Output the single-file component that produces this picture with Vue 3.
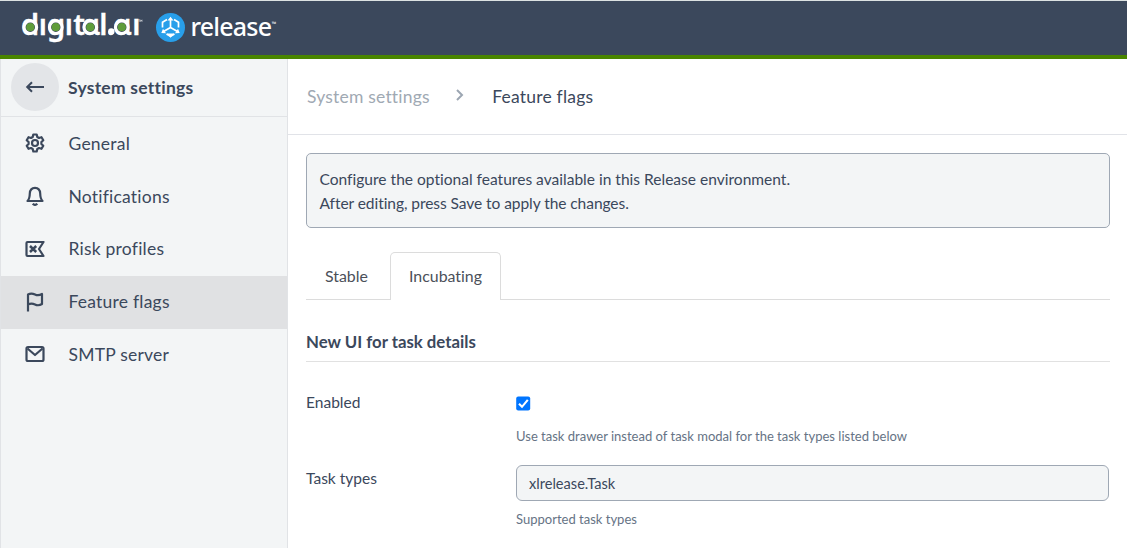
<script setup>
const items = [
  { id: 'general', label: 'General' },
  { id: 'notifications', label: 'Notifications' },
  { id: 'risk', label: 'Risk profiles' },
  { id: 'flags', label: 'Feature flags', active: true },
  { id: 'smtp', label: 'SMTP server' },
]
const dots = [30.3, 55.8, 90.3, 121.8]
</script>

<template>
  <div class="page">
    <header class="topbar">
      <svg class="brand" width="290" height="54" viewBox="0 1 290 54">
        <g fill="#fff">
          <text class="wordmark" y="34.700" x="21 38.700 47 64.700 73.300 81.700 99.200 106.800 113.200 132.200">dıgıtɑl.ɑı</text>
          <circle cx="111.300" cy="31.500" r="3.200" />
          <path d="M138.300 19.800H140M139.200 19.800V22M140.600 22V19.800L141.300 21L142 19.800V22" fill="none" stroke="#fff" stroke-width=".45" />
        </g>
        <g v-for="x in dots" :key="x">
          <circle :cx="x" cy="27.200" r="6.300" fill="#3b485c" stroke="#fff" stroke-width="3.200" />
          <circle :cx="x" cy="27.200" r="4.100" fill="#5f9c3a" />
        </g>
        <circle cx="170.500" cy="27.500" r="14.500" fill="#289fea" />
        <g fill="none" stroke="#fff" stroke-width="1.700">
          <path d="M170.500 27.500V19M170.500 27.500L163.500 31.500M170.500 27.500L177.500 31.500" />
          <path d="M167 19.500L162.500 22.200V27.500M174 19.500L178.500 22.200V27.500M166.500 34L170.500 36.300L174.500 34" />
        </g>
        <g fill="#fff">
          <path d="M170.500 16.700L173.500 20.500H167.500ZM161.300 33L163 28.800L166 33.300ZM179.700 33L178 28.800L175 33.300ZM170.500 37.800L167 33.500H174Z" />
        </g>
        <text class="product" x="190.500" y="35.700" textLength="81.500" fill="#fff">release</text>
        <text class="tm" x="271.800" y="25.500" fill="#fff">™</text>
      </svg>
    </header>

    <div class="body">
      <aside class="sidebar">
        <div class="side-head">
          <span class="back">
            <svg width="20" height="20" viewBox="0 0 20 20" fill="none" stroke="#3b485c" stroke-width="2"><path d="M19 10H2M7 5.200L2.200 10L7 14.800" /></svg>
          </span>
          <strong>System settings</strong>
        </div>
        <nav>
          <a v-for="item in items" :key="item.id" class="item" :class="{ active: item.active }">
            <svg width="20" height="20" viewBox="0 0 20 20" fill="none" stroke="#3b485c" stroke-width="2.200" stroke-linejoin="round">
              <template v-if="item.id === 'general'">
                <circle cx="10" cy="10" r="3" />
                <path d="M8.300 1.500H11.700L12.300 4L14 5L16.500 4.200L18.300 7.200L16.400 9V11L18.300 12.800L16.500 15.800L14 15L12.300 16L11.700 18.500H8.300L7.700 16L6 15L3.500 15.800L1.700 12.800L3.600 11V9L1.700 7.200L3.500 4.200L6 5L7.700 4Z" />
              </template>
              <template v-else-if="item.id === 'notifications'">
                <path d="M2.500 15H17.500C15.500 13 15.300 11.500 15.200 7.500C15 4 13 1.800 10 1.800S5 4 4.800 7.500C4.700 11.500 4.500 13 2.500 15Z" />
                <path d="M7.700 17.700Q10 20 12.300 17.700" />
              </template>
              <template v-else-if="item.id === 'risk'">
                <path d="M18.500 3H2.500Q1.500 3 1.500 4V16Q1.500 17 2.500 17H18.500L14 10Z" />
                <path d="M5 7L11.200 13M11.200 7L5 13" stroke-width="2.500" />
              </template>
              <template v-else-if="item.id === 'flags'">
                <path d="M3 19.500V2.500C6 .8 8 1.500 10 2.500S14.500 3.500 17 2V12C14.500 13.600 12 13.500 10 12.500S6 11 3 12.500" />
              </template>
              <template v-else>
                <rect x="1.500" y="3" width="17" height="14" rx="1.500" />
                <path d="M2.500 4.500L10 11L17.500 4.500" />
              </template>
            </svg>
            <span>{{ item.label }}</span>
          </a>
        </nav>
      </aside>

      <main class="main">
        <div class="crumbs">
          <span class="parent">System settings</span>
          <svg width="10" height="12" viewBox="0 0 10 12" fill="none" stroke="#9ca6b2" stroke-width="2"><path d="M2 1L7 6L2 11" /></svg>
          <span class="current">Feature flags</span>
        </div>
        <div class="content">
          <p class="notice">Configure the optional features available in this Release environment.<br /><span class="second">After editing, press Save to apply the changes.</span></p>
          <div class="tabs">
            <span class="tab">Stable</span>
            <span class="tab selected">Incubating</span>
          </div>
          <h2>New UI for task details</h2>
          <div class="row enabled">
            <label>Enabled</label>
            <div class="field">
              <svg class="check" width="15" height="15" viewBox="0 0 15 15"><rect x=".2" y=".5" width="14" height="14" rx="2" fill="#0075ff" /><path d="M3 7.800L6 10.800L11.800 3.800" fill="none" stroke="#fff" stroke-width="2.100" /></svg>
              <div class="hint">Use task drawer instead of task modal for the task types listed below</div>
            </div>
          </div>
          <div class="row types">
            <label>Task types</label>
            <div class="field">
              <div class="input">xlrelease.Task</div>
              <div class="hint">Supported task types</div>
            </div>
          </div>
        </div>
      </main>
    </div>
  </div>
</template>

<style>
body { margin: 0; overflow: hidden; }
</style>

<style scoped>
* { box-sizing: border-box; }
.page { width: 1127px; height: 548px; display: flex; flex-direction: column; background: #fff; color: #3b485c; font-family: Lato, "Liberation Sans", sans-serif; font-variant-ligatures: none; overflow: hidden; }
.topbar { height: 59px; flex: none; background: #3b485c; border-top: 1px solid #dce2e2; border-bottom: 4px solid #498500; }
.brand { display: block; }
.wordmark { font: 600 29px "Noto Sans", sans-serif; stroke: #fff; stroke-width: .3px; }
.product { font: 500 25px "Noto Sans", sans-serif; }
.tm { font: 6px "Noto Sans", sans-serif; }
.body { flex: 1; display: flex; min-height: 0; }
.sidebar { width: 288px; flex: none; background: #f3f5f6; border-left: 1px solid #e1e3e6; border-right: 1px solid #e1e3e6; }
.side-head { height: 58px; display: flex; align-items: center; padding-left: 10px; border-bottom: 1px solid #e1e3e6; font-size: 17.5px; letter-spacing: .25px; }
.back { width: 48px; height: 48px; border-radius: 50%; background: #e3e5e8; display: flex; align-items: center; justify-content: center; margin: -1px 9px 0 0; }
nav { padding-top: .75px; }
.item { height: 52.75px; display: flex; align-items: center; gap: 23.500px; padding-left: 24px; font-size: 17.500px; letter-spacing: .22px; }
.item svg, .item span { margin-top: -1.500px; }
.active { background: #e0e1e3; }
.main { flex: 1; }
.crumbs { height: 76px; border-bottom: 1px solid #e1e3e8; display: flex; align-items: center; padding: 0 0 0 19px; font-size: 17.5px; letter-spacing: .2px; }
.crumbs svg { margin: -3px 27px 0 25.500px; }
.parent { color: #a0a9b3; }
.content { padding: 18px 17px 0 18px; font-size: 15.550px; }
.notice { margin: 0; height: 75px; padding: 13px 12.500px; background: #f3f5f6; border: 1px solid #9fa8b4; border-radius: 5px; line-height: 24px; }
.second { letter-spacing: -.075px; }
.tabs { display: flex; height: 48px; margin-top: 24px; border-bottom: 1px solid #dcdcdc; color: #4b5059; font-size: 15.900px; }
.tab { width: 84px; height: 48px; padding-left: 19px; line-height: 47px; }
.tab.selected { width: 111px; padding-left: 18px; line-height: 45px; background: #fff; border: 1px solid #dcdcdc; border-bottom: 0; border-radius: 5px 5px 0 0; }
h2 { height: 62px; margin: 0; padding-top: 30px; border-bottom: 1px solid #e1e1e1; font-size: 16.800px; line-height: 24px; }
.row { display: flex; }
.row label { width: 210px; flex: none; line-height: 24px; }
.field { flex: 1; }
.enabled { height: 103px; padding-top: 28px; }
.check { display: block; margin: 6px 0 14px; }
.hint { font-size: 13.030px; line-height: 22px; color: #667385; }
.types label { padding-top: 1px; }
.input { width: 593px; height: 36px; padding-left: 12px; line-height: 36px; font-size: 14.600px; background: #f3f5f6; border: 1px solid #9fa8b4; border-radius: 6px; margin-bottom: 7px; }
</style>
